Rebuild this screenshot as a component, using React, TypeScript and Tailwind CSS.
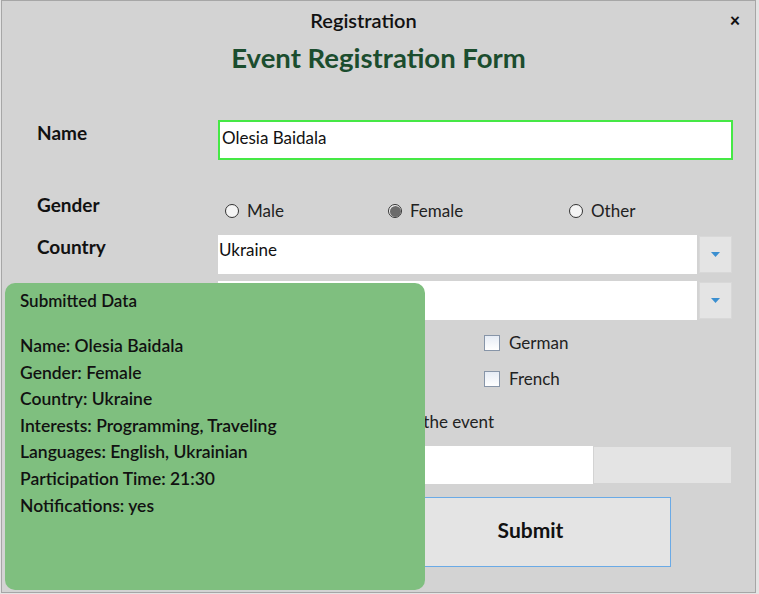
type RadioProps = { label: string; checked?: boolean; width: string };

function Radio({ label, checked, width }: RadioProps) {
    return (
        <div className={`flex items-center gap-[8px] ${width}`}>
            <span className="flex h-[14px] w-[14px] items-center justify-center rounded-full border-[1.5px] border-[#333] bg-[#f4f4f4]">
                {checked && <span className="h-[11px] w-[11px] rounded-full bg-[#6b6b6b]" />}
            </span>
            <span className="text-[17px] leading-[24px] text-[#222]">{label}</span>
        </div>
    );
}

function Check({ label }: { label?: string }) {
    return (
        <div className="flex h-[36px] items-center gap-[9px]">
            <span className="h-[16px] w-[16px] border border-[#8795a8] bg-gradient-to-b from-[#e6ecf5] to-[#ffffff]" />
            {label && <span className="text-[17px] leading-[24px] text-[#222]">{label}</span>}
        </div>
    );
}

function Combo({ value }: { value?: string }) {
    return (
        <div className="flex items-center gap-[2px]">
            <div className="h-[39px] w-[479px] bg-white px-[1px] pt-[3px] text-[17px] leading-[24px] text-[#111]">{value}</div>
            <div className="flex h-[37px] w-[33px] items-center justify-center border border-[#d8d8d8] bg-[#e4e4e4]">
                <svg width="9" height="5" viewBox="0 0 9 5">
                    <path d="M0 0 H9 L4.5 5 Z" fill="#3b8fd0" />
                </svg>
            </div>
        </div>
    );
}

const submitted = [
    "Name: Olesia Baidala",
    "Gender: Female",
    "Country: Ukraine",
    "Interests: Programming, Traveling",
    "Languages: English, Ukrainian",
    "Participation Time: 21:30",
    "Notifications: yes",
];

export default function App() {
    return (
        <div className="h-[594px] w-[759px] bg-[#e4e4e4] font-['Lato','Noto_Sans',sans-serif]">
            <div className="relative ml-px h-[593px] w-[755px] border border-[#a6a6a6] bg-[#d3d3d3]">
                <div className="flex h-[37px] items-center">
                    <div className="flex-1 text-center text-[20px] font-semibold text-[#111]">Registration</div>
                    <div className="w-[30px] pr-[10px] text-center text-[18px] font-black leading-none text-[#111]">×</div>
                </div>
                <h1 className="h-[40px] text-center text-[27.5px] font-bold leading-[40px] text-[#1b4d2e]">Event Registration Form</h1>

                <div className="mt-[42px] pl-[35px]">
                    <div className="flex">
                        <div className="w-[181px] pt-[1px] text-[19px] font-bold leading-[24px] text-[#111]">Name</div>
                        <div className="h-[40px] w-[515px] border-2 border-[#45e845] bg-white px-[2px] pt-[4px] text-[17px] leading-[24px] text-[#111]">
                            Olesia Baidala
                        </div>
                    </div>

                    <div className="mt-[33px] flex">
                        <div className="w-[181px] text-[19px] font-bold leading-[24px] text-[#111]">Gender</div>
                        <div className="mt-[6px] flex pl-[7px]">
                            <Radio label="Male" width="w-[163px]" />
                            <Radio label="Female" checked width="w-[181px]" />
                            <Radio label="Other" width="w-[100px]" />
                        </div>
                    </div>

                    <div className="mt-[12px] flex">
                        <div className="w-[181px] text-[19px] font-bold leading-[24px] text-[#111]">Country</div>
                        <Combo value="Ukraine" />
                    </div>

                    <div className="mt-[7px] flex">
                        <div className="w-[181px]" />
                        <Combo />
                    </div>

                    <div className="mt-[5px] flex">
                        <div className="w-[181px]" />
                        <div className="w-[266px] pl-[12px]">
                            <Check />
                            <Check />
                        </div>
                        <div>
                            <Check label="German" />
                            <Check label="French" />
                        </div>
                    </div>

                    <div className="mt-[13px] w-[457px] text-right text-[17px] leading-[24px] text-[#222]">the event</div>

                    <div className="mt-[12px] flex items-center gap-[1px]">
                        <div className="h-[38px] w-[556px] bg-white" />
                        <div className="h-[36px] w-[137px] bg-[#e4e4e4]" />
                    </div>

                    <button className="ml-[353px] mt-[13px] flex h-[70px] w-[281px] items-center justify-center border border-[#6aaae6] bg-[#e4e4e4] pb-[4px] text-[21px] font-bold text-[#111]">
                        Submit
                    </button>
                </div>

                <div className="absolute left-[3px] top-[282px] h-[307px] w-[420px] rounded-[10px] bg-[#7fbf7f] px-[15px] pt-[8px] text-[#111]">
                    <div className="text-[17px] font-semibold leading-[20px]">Submitted Data</div>
                    <div className="mt-[22px]">
                        {submitted.map((line) => (
                            <div key={line} className="text-[17.5px] font-semibold leading-[26.6px]">{line}</div>
                        ))}
                    </div>
                </div>
            </div>
        </div>
    );
}
